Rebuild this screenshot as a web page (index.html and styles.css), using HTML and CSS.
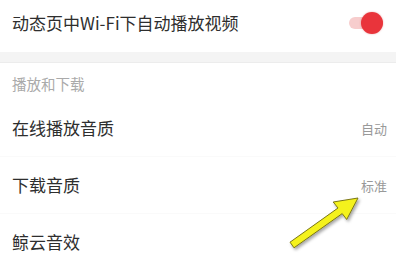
FILE: index.html
```html
<!DOCTYPE html>
<html lang="zh-CN">
  <head>
    <meta charset="UTF-8" />
    <meta name="viewport" content="width=device-width, initial-scale=1.0" />
    <title>设置</title>
    <link rel="stylesheet" href="styles.css">
  </head>
  <body>
    <div class="settings">
      <div class="row row-top">
        <span class="label">动态页中Wi-Fi下自动播放视频</span>
        <span class="switch on"><span class="knob"></span></span>
      </div>
      <div class="band"></div>

      <div class="section-title">播放和下载</div>
      <div class="row">
        <span class="label">在线播放音质</span>
        <span class="value">自动</span>
      </div>
      <div class="row">
        <span class="label">下载音质</span>
        <span class="value">标准</span>
      </div>
      <div class="row">
        <span class="label">鲸云音效</span>
      </div>

      <!-- annotation arrow drawn over the list -->
      <svg class="arrow" width="396" height="262" viewBox="0 0 396 262">
        <defs>
          <filter id="shade" x="-20%" y="-20%" width="140%" height="140%">
            <feDropShadow dx="1.5" dy="2" stdDeviation="1.6" flood-color="#000" flood-opacity="0.35" />
          </filter>
        </defs>
        <polygon
          points="290,242.2 338,208 333.2,202 358,198 346.7,219.5 342.2,213.6 294,247.8"
          fill="#f4f21a" stroke="#7a7614" stroke-width="1" stroke-linejoin="round"
          filter="url(#shade)" />
      </svg>
    </div>
  </body>
</html>
```

FILE: styles.css
```css
* {
  box-sizing: border-box;
}

body {
  margin: 0;
  background: #fff;
  font-family: 'Noto Sans CJK SC', 'Noto Sans', sans-serif;
  color: #333;
}

.settings {
  position: relative;
  width: 396px;
  height: 262px;
  overflow: hidden;
}

.row {
  display: flex;
  align-items: center;
  justify-content: space-between;
  height: 57px;
  padding: 0 9px 0 12px;
  border-bottom: 1px solid #fafafa;
}

.row-top {
  height: 52px;
  padding-bottom: 6px;
  border-bottom: none;
}

.label {
  font-size: 17px;
  line-height: 24px;
  color: #2e2e2e;
}

.value {
  font-size: 13px;
  color: #999;
}

.switch {
  position: relative;
  width: 38px;
  height: 22px;
  margin-right: 2px;
}

.switch::before {
  content: '';
  position: absolute;
  left: 2px;
  top: 5px;
  width: 34px;
  height: 12px;
  border-radius: 6px;
  background: #f7cdcd;
}

.switch .knob {
  position: absolute;
  right: 2px;
  top: 0;
  width: 22px;
  height: 22px;
  border-radius: 50%;
  background: #e9343b;
  box-shadow: 0 0 2px rgba(200, 40, 40, 0.4);
}

.band {
  height: 11px;
  background: #f4f4f4;
  border-bottom: 1px solid #ececec;
}

.section-title {
  padding: 11px 12px 6px;
  font-size: 14.5px;
  line-height: 20px;
  color: #aaa;
}

.arrow {
  position: absolute;
  left: 0;
  top: 0;
  pointer-events: none;
}
```
